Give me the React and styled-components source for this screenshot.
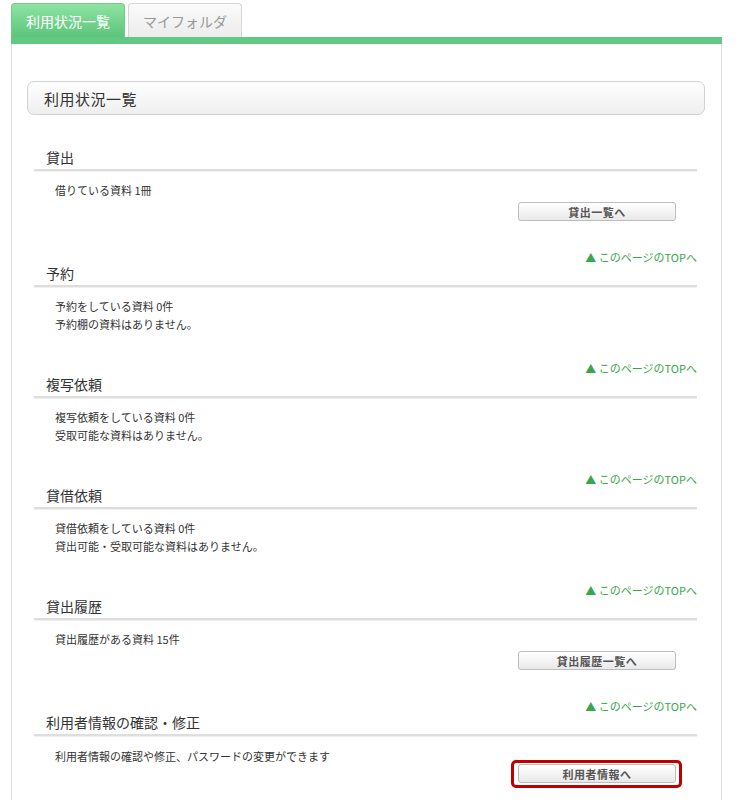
import React from "react";
import styled, { createGlobalStyle } from "styled-components";

const Global = createGlobalStyle`
  html, body { margin: 0; padding: 0; background: #fff; }
  body { font-family: "Noto Sans CJK JP", "Noto Sans", sans-serif; color: #333; }
`;

const Page = styled.div`
  padding: 3px 17px 0 11px;
  width: 739px;
  box-sizing: border-box;
`;

const TabBar = styled.div`
  display: flex;
  gap: 3px;
  height: 34px;
`;

const Tab = styled.div`
  width: 114px;
  box-sizing: border-box;
  display: flex;
  align-items: center;
  justify-content: center;
  font-size: 14px;
  border-radius: 4px 4px 0 0;
  ${(p) =>
    p.$active
      ? `background: linear-gradient(#8fe3a3, #5cc57b); color: #fff; border: 1px solid #6fd08c; border-bottom: none;`
      : `background: linear-gradient(#fbfbfb, #ececec); color: #999; border: 1px solid #d6d6d6; border-bottom: none;`}
`;

const GreenBar = styled.div`
  height: 7px;
  background: #62c985;
`;

const Panel = styled.div`
  border-left: 1px solid #dcdcdc;
  border-right: 1px solid #dcdcdc;
  padding: 37px 16px 40px 15px;
  min-height: 800px;
`;

const TitleBox = styled.div`
  height: 34px;
  box-sizing: border-box;
  border: 1px solid #d2d2d2;
  border-radius: 7px;
  background: linear-gradient(#fefefe, #efefef);
  display: flex;
  align-items: center;
  padding-left: 16px;
  font-size: 15px;
  color: #333;
  letter-spacing: 0.5px;
`;

const Sections = styled.div`
  padding: 32px 8px 0 7px;
`;

const Section = styled.section``;

const Heading = styled.h3`
  margin: 0;
  font-size: 14px;
  font-weight: normal;
  line-height: 20px;
  color: #333;
  padding: 0 0 2px 12px;
  border-bottom: 2px solid #dedede;
  box-shadow: 0 1px 0 #f0f0f0;
`;

const Body = styled.div`
  padding: ${(p) => (p.$last ? 11 : 10)}px 0 0 21px;
  font-size: 11px;
  line-height: 18px;
  color: #333;
`;

const ButtonRow = styled.div`
  display: flex;
  justify-content: flex-end;
  padding-right: 21px;
  margin-top: ${(p) => (p.$tight ? -1 : 3)}px;
`;

const Button = styled.div`
  width: 158px;
  height: 19px;
  box-sizing: border-box;
  border: 1px solid #bdbdbd;
  border-radius: 3px;
  background: linear-gradient(#ffffff, #e9e9e9);
  font-size: 11px;
  font-weight: bold;
  color: #555;
  display: flex;
  align-items: center;
  justify-content: center;
  letter-spacing: 0.5px;
  position: relative;
  ${(p) =>
    p.$highlight &&
    `
    &::after {
      content: "";
      position: absolute;
      left: -8px; right: -7px; top: -5px; bottom: -6px;
      border: 3px solid #c00000;
      border-radius: 5px;
    }
  `}
`;

const TopLink = styled.div`
  text-align: right;
  font-size: 11px;
  line-height: 16px;
  color: #3aa54a;
  margin-top: ${(p) => p.$gap}px;
  margin-bottom: -2px;
`;

const sections = [
  { title: "貸出", lines: ["借りている資料 1冊"], button: "貸出一覧へ" },
  { title: "予約", lines: ["予約をしている資料 0件", "予約棚の資料はありません。"] },
  { title: "複写依頼", lines: ["複写依頼をしている資料 0件", "受取可能な資料はありません。"] },
  { title: "貸借依頼", lines: ["貸借依頼をしている資料 0件", "貸出可能・受取可能な資料はありません。"] },
  { title: "貸出履歴", lines: ["貸出履歴がある資料 15件"], button: "貸出履歴一覧へ" },
  {
    title: "利用者情報の確認・修正",
    lines: ["利用者情報の確認や修正、パスワードの変更ができます"],
    button: "利用者情報へ",
    highlight: true,
    last: true,
  },
];

export default function App() {
  return (
    <>
      <Global />
      <Page>
        <TabBar>
          <Tab $active>利用状況一覧</Tab>
          <Tab>マイフォルダ</Tab>
        </TabBar>
        <GreenBar />
        <Panel>
          <TitleBox>利用状況一覧</TitleBox>
          <Sections>
            {sections.map((s) => (
              <Section key={s.title}>
                <Heading>{s.title}</Heading>
                <Body $last={s.last}>
                  {s.lines.map((l) => (
                    <div key={l}>{l}</div>
                  ))}
                </Body>
                {s.button && (
                  <ButtonRow $tight={s.last}>
                    <Button $highlight={s.highlight}>{s.button}</Button>
                  </ButtonRow>
                )}
                {!s.last && (
                  <TopLink $gap={s.button ? 28 : 27}>▲ このページのTOPへ</TopLink>
                )}
              </Section>
            ))}
          </Sections>
        </Panel>
      </Page>
    </>
  );
}
